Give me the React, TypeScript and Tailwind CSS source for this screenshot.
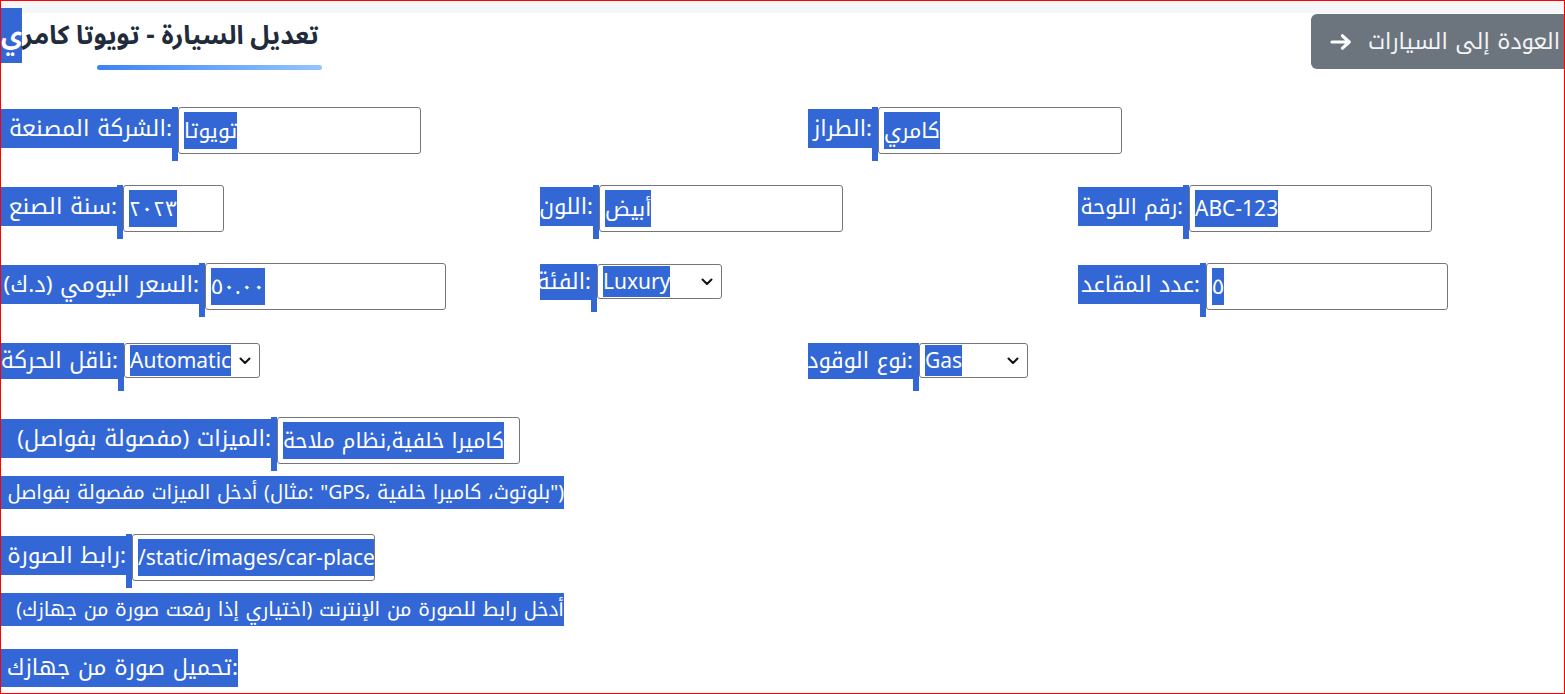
import React from "react";

// لون التحديد كما يظهر في الصورة
const HL = "bg-[#3367d6] text-white";
const KUFI = "font-['Noto_Kufi_Arabic','Noto_Sans',sans-serif]";

function Bar({ tall = false }: { tall?: boolean }) {
  return <div className={`w-[6px] shrink-0 ${HL} ${tall ? "h-[54px]" : "h-[48px]"}`} />;
}

type FieldProps = {
  label: string;
  labelW: string;
  value: string;
  labelSize?: string;
};

function TextField({
  label,
  labelW,
  value,
  labelSize = "text-[22px]",
  inputW = "w-[243px]",
}: FieldProps & { inputW?: string }) {
  return (
    <div className="flex items-start">
      <div className={`${labelW} mt-[2px] h-[39px] shrink-0 flex items-center justify-end whitespace-nowrap ${labelSize} ${HL}`}>
        <span className="leading-[32px]">{label}</span>
      </div>
      <Bar tall />
      <div
        className={`${inputW} h-[47px] shrink-0 rounded-[3px] border border-[#767676] bg-white px-[5px] flex items-center overflow-hidden`}
      >
        <span className={`h-[37px] flex items-center whitespace-nowrap text-[21px] leading-[30px] ${HL}`}>{value}</span>
      </div>
    </div>
  );
}

function SelectField({ label, labelW, value, labelSize = "text-[22px]", selectW }: FieldProps & { selectW: string }) {
  return (
    <div className="flex items-start">
      <div className={`${labelW} h-[36px] shrink-0 flex items-center justify-end whitespace-nowrap ${labelSize} ${HL}`}>
        <span className="leading-[32px]">{label}</span>
      </div>
      <Bar />
      <div
        className={`${selectW} h-[35px] shrink-0 rounded-[3px] border border-[#767676] bg-white pl-[5px] pr-[8px] flex items-center justify-between`}
      >
        <span className={`h-[31px] flex items-center whitespace-nowrap text-[21px] leading-[30px] ${HL}`}>{value}</span>
        <svg width="12" height="8" viewBox="0 0 12 8" className="shrink-0">
          <polyline points="1.5,1.5 6,6 10.5,1.5" fill="none" stroke="#111" strokeWidth="2" strokeLinecap="round" strokeLinejoin="round" />
        </svg>
      </div>
    </div>
  );
}

function Help({ text }: { text: string }) {
  return (
    <div className={`w-[563px] h-[33px] flex items-center justify-end whitespace-nowrap text-[19.5px] ${HL}`}>
      <span className="leading-[28px]">{text}</span>
    </div>
  );
}

const BIG = "text-[22.5px]";

export default function App() {
  return (
    <div className={`w-[1565px] h-[694px] overflow-hidden border border-[#ff0000] bg-white text-[#222] ${KUFI}`}>
      <div className="h-[12px] bg-[#f5f6f8]" />

      {/* العنوان وزر العودة */}
      <div className="mt-[1px] flex items-start justify-between">
        <div className="w-[322px]">
          <h1 className="h-[43px] flex items-center whitespace-nowrap text-[26px] font-bold text-[#212b3b] font-['Noto_Sans_Arabic','DejaVu_Sans',sans-serif]">
            <span>
              تعديل السيارة - تويوتا كامر<span className={HL}>ي</span>
            </span>
          </h1>
          <div className="mt-[8px] ml-[96px] h-[5px] w-[225px] rounded-full bg-gradient-to-r from-[#3b82f6] to-[#93c5fd]" />
        </div>
        <button className="-mr-[40px] h-[55px] w-[293px] shrink-0 rounded-[6px] bg-[#6c757d] pl-[19px] flex items-center gap-[16px] text-[22px] text-[#f3f4f5]">
          <svg width="22" height="16" viewBox="0 0 22 16" className="shrink-0">
            <path d="M2 8 H19 M12.5 1.8 L19.2 8 L12.5 14.2" fill="none" stroke="#fff" strokeWidth="3.2" strokeLinecap="round" strokeLinejoin="round" />
          </svg>
          <span className="whitespace-nowrap leading-[30px]">العودة إلى السيارات</span>
        </button>
      </div>

      {/* النموذج */}
      <form className="mt-[37px] flex flex-col">
        <div className="grid grid-cols-[807px_1fr]">
          <TextField labelSize={BIG} label="الشركة المصنعة:" labelW="w-[171px]" value="تويوتا" />
          <TextField label="الطراز:" labelW="w-[64px]" value="كامري" inputW="w-[244px]" />
        </div>

        <div className="mt-[24px] grid grid-cols-[539px_538px_1fr]">
          <TextField labelSize={BIG} label="سنة الصنع:" labelW="w-[116px]" value="٢٠٢٣" inputW="w-[101px]" />
          <TextField label="اللون:" labelW="w-[53px]" value="أبيض" inputW="w-[244px]" />
          <TextField labelSize="text-[21px]" label="رقم اللوحة:" labelW="w-[105px]" value="ABC-123" />
        </div>

        <div className="mt-[24px] grid grid-cols-[539px_538px_1fr]">
          <TextField labelSize={BIG} label="السعر اليومي (د.ك):" labelW="w-[198px]" value="٥٠.٠٠" inputW="w-[241px]" />
          <div className="pt-[1px]">
            <SelectField label="الفئة:" labelW="w-[51px]" value="Luxury" selectW="w-[125px]" />
          </div>
          <TextField label="عدد المقاعد:" labelW="w-[122px]" value="٥" inputW="w-[242px]" />
        </div>

        <div className="mt-[26px] grid grid-cols-[807px_1fr]">
          <SelectField labelSize={BIG} label="ناقل الحركة:" labelW="w-[117px]" value="Automatic" selectW="w-[136px]" />
          <SelectField label="نوع الوقود:" labelW="w-[105px]" value="Gas" selectW="w-[109px]" />
        </div>

        <div className="mt-[26px]">
          <TextField labelSize={BIG} label="الميزات (مفصولة بفواصل):" labelW="w-[270px]" value="كاميرا خلفية,نظام ملاحة" />
        </div>
        <div className="mt-[5px]">
          <Help text='أدخل الميزات مفصولة بفواصل (مثال: "GPS، بلوتوث، كاميرا خلفية")' />
        </div>

        <div className="mt-[25px]">
          <TextField labelSize={BIG} label="رابط الصورة:" labelW="w-[125px]" value="/static/images/car-placeholder.jpg" />
        </div>
        <div className="mt-[5px]">
          <Help text="أدخل رابط للصورة من الإنترنت (اختياري إذا رفعت صورة من جهازك)" />
        </div>

        <div className="mt-[23px]">
          <div className={`w-[237px] h-[38px] flex items-center justify-end whitespace-nowrap ${BIG} ${HL}`}>
            <span className="leading-[32px]">تحميل صورة من جهازك:</span>
          </div>
        </div>
      </form>
    </div>
  );
}
